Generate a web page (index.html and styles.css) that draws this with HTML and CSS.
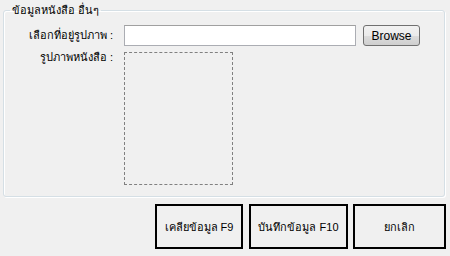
FILE: index.html
```html
<!DOCTYPE html>
<html lang="th">
<head>
    <meta charset="UTF-8">
    <title>ข้อมูลหนังสือ อื่นๆ</title>
    <link rel="stylesheet" href="styles.css">
</head>
<body>
    <fieldset class="group">
        <legend>ข้อมูลหนังสือ อื่นๆ</legend>
        <div class="form">
            <label class="label">เลือกที่อยู่รูปภาพ :</label>
            <input type="text" class="path-box">
            <button class="browse">Browse</button>

            <label class="label">รูปภาพหนังสือ :</label>
            <div class="picture"></div>
        </div>
    </fieldset>

    <div class="actions">
        <button class="action clear">เคลียข้อมูล F9</button>
        <button class="action save">บันทึกข้อมูล F10</button>
        <button class="action cancel">ยกเลิก</button>
    </div>
</body>
</html>
```

FILE: styles.css
```css
body {
    margin: 0;
    width: 450px;
    height: 256px;
    background: #f0f0f0;
    font-family: Tahoma, "Liberation Sans", "Noto Sans", sans-serif;
    font-size: 11px;
    color: #000;
    overflow: hidden;
}
.group {
    margin: 4px 5px 0 3px;
    padding: 0 0 11px 0;
    border: 1px solid #d5dfe5;
    border-radius: 3px;
    box-shadow: inset 1px 1px 0 #fff, 1px 1px 0 #fff;
}
.group legend {
    margin-left: 6px;
    padding: 0 2px;
    line-height: 13px;
}
.form {
    display: grid;
    grid-template-columns: 113px 232px 57px;
    grid-template-rows: 21px 133px;
    column-gap: 7px;
    row-gap: 6px;
    padding-top: 8px;
}
.label {
    text-align: right;
    padding-right: 4px;
    line-height: 21px;
}
.form .label:nth-of-type(2) {
    line-height: 11px;
}
.path-box {
    box-sizing: border-box;
    height: 21px;
    margin: 0;
    border: 1px solid #abadb3;
    border-top-color: #a0a0a0;
    background: #fff;
}
.browse {
    box-sizing: border-box;
    height: 21px;
    padding: 0;
    border: 1px solid #707070;
    border-radius: 3px;
    background: linear-gradient(#f2f2f2 0%, #ebebeb 50%, #dddddd 51%, #cfcfcf 100%);
    font-family: inherit;
    font-size: 12px;
    color: #000;
}
.picture {
    box-sizing: border-box;
    width: 109px;
    height: 133px;
    border: 1px dashed #808080;
}
.actions {
    display: flex;
    justify-content: flex-end;
    gap: 5px;
    padding: 7px 4px 0 0;
}
.action {
    box-sizing: border-box;
    height: 45px;
    padding: 0;
    border: 2px solid #000;
    background: #f0f0f0;
    font-family: inherit;
    font-size: 11px;
    color: #000;
}
.clear { width: 88px; margin-right: 1px; }
.save { width: 99px; }
.cancel { width: 93px; }
```
